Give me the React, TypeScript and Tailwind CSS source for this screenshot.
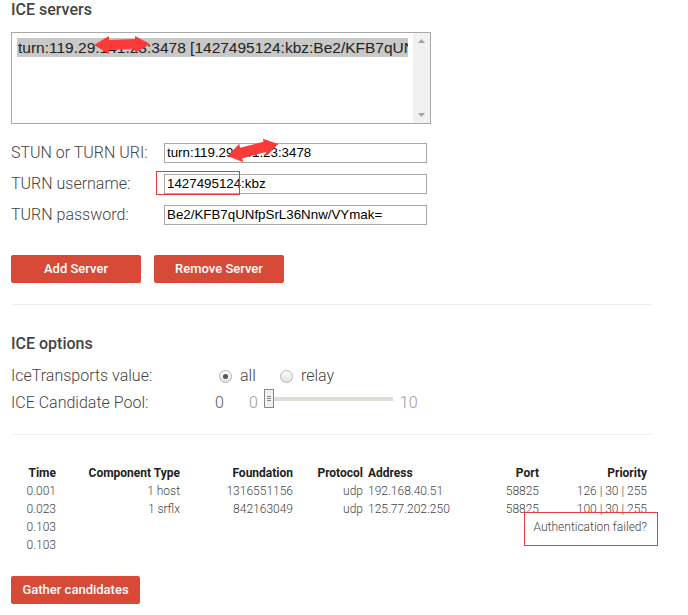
import React from "react";

const rows = [
  { time: "0.001", comp: "1 host", foundation: "1316551156", proto: "udp", address: "192.168.40.51", port: "58825", priority: "126 | 30 | 255" },
  { time: "0.023", comp: "1 srflx", foundation: "842163049", proto: "udp", address: "125.77.202.250", port: "58825", priority: "100 | 30 | 255" },
  { time: "0.103", comp: "", foundation: "", proto: "", address: "", port: "", priority: "" },
  { time: "0.103", comp: "", foundation: "", proto: "", address: "", port: "", priority: "" },
];

const RedArrow = ({ className }: { className: string }) => (
  <svg viewBox="0 0 56 18" preserveAspectRatio="none" className={className}>
    <polygon points="0,9 15,0 15,4 41,3 41,0 56,8 41,17 41,13 15,14 15,18" fill="#fb3a3a" />
  </svg>
);

const Radio = ({ checked }: { checked?: boolean }) => (
  <span className="w-[13px] h-[13px] rounded-full border border-[#b5b5b5] bg-gradient-to-b from-[#fdfdfd] to-[#e2e2e2] flex items-center justify-center">
    {checked && <span className="w-[5px] h-[5px] rounded-full bg-[#555]" />}
  </span>
);

const FormRow = ({ label, value }: { label: string; value: string }) => (
  <div className="flex items-center h-[20px]">
    <label className="w-[153px] text-[16px] leading-[20px]">{label}</label>
    <div className="w-[263px] h-[20px] border border-[#a9a9a9] px-[2px] flex items-center font-['Liberation_Sans',Arial,sans-serif] text-[13.33px] text-black whitespace-nowrap overflow-hidden">
      {value}
    </div>
  </div>
);

const Button = ({ children, w }: { children: React.ReactNode; w: string }) => (
  <button className={`${w} h-[28px] bg-[#d84a38] text-white text-[13px] font-medium rounded-[2px] flex items-center justify-center`}>
    {children}
  </button>
);

export default function App() {
  return (
    <div className="relative w-[688px] h-[615px] bg-white px-[11px] font-['Roboto',sans-serif] font-light text-[#444]">
      <h2 className="text-[16px] leading-[20px] font-medium">ICE servers</h2>

      {/* server list */}
      <div className="mt-[12px] w-[420px] h-[92px] border border-[#a9a9a9] flex">
        <div className="flex-1 p-[5px] overflow-hidden">
          <div className="h-[19px] bg-[#c8c8c8] px-[1px] flex items-center whitespace-nowrap overflow-hidden font-['Liberation_Sans',Arial,sans-serif] text-[15.5px] text-[#222]">
            turn:119.29.141.23:3478 [1427495124:kbz:Be2/KFB7qUNfpSrL36Nnw/VYmak=]
          </div>
        </div>
        <div className="w-[17px] bg-[#f1f1f1] flex flex-col items-center justify-between py-[6px]">
          <svg width="7" height="4" viewBox="0 0 7 4"><polygon points="0,4 3.5,0 7,4" fill="#a3a3a3" /></svg>
          <svg width="7" height="4" viewBox="0 0 7 4"><polygon points="0,0 7,0 3.5,4" fill="#a3a3a3" /></svg>
        </div>
      </div>

      <div className="mt-[19px] flex flex-col gap-[11px]">
        <FormRow label="STUN or TURN URI:" value="turn:119.29.141.23:3478" />
        <FormRow label="TURN username:" value="1427495124:kbz" />
        <FormRow label="TURN password:" value="Be2/KFB7qUNfpSrL36Nnw/VYmak=" />
      </div>

      <div className="mt-[30px] flex gap-[13px]">
        <Button w="w-[130px]">Add Server</Button>
        <Button w="w-[130px]">Remove Server</Button>
      </div>

      <div className="mt-[21px] w-[641px] border-t border-[#eee]" />

      <h2 className="mt-[29px] text-[16px] leading-[20px] font-medium">ICE options</h2>

      <div className="mt-[12px] h-[20px] flex items-center text-[16px]">
        <span className="w-[208px]">IceTransports value:</span>
        <Radio checked />
        <span className="ml-[8px] w-[40px]">all</span>
        <Radio />
        <span className="ml-[8px]">relay</span>
      </div>

      <div className="mt-[7px] h-[20px] flex items-start text-[16px] leading-[20px]">
        <span className="w-[204px]">ICE Candidate Pool:</span>
        <span className="text-[#555]">0</span>
        <span className="ml-[25px] text-[#999]">0</span>
        <div className="ml-[6px] -mt-[4px] flex items-center">
          <div className="w-[10px] h-[19px] border border-[#8a8a8a] bg-[#f0f0f0] flex flex-col items-center justify-center gap-[1px]">
            <span className="w-[4px] h-px bg-[#888]" />
            <span className="w-[4px] h-px bg-[#888]" />
            <span className="w-[4px] h-px bg-[#888]" />
          </div>
          <div className="w-[119px] h-[4px] bg-[#e1ddd5]" />
        </div>
        <span className="ml-[7px] text-[#999]">10</span>
      </div>

      <div className="mt-[21px] w-[641px] border-t border-[#eee]" />

      {/* candidates table */}
      <div className="mt-[29px] grid grid-cols-[45px_124px_113px_70px_107px_69px_108px] text-[12px] leading-[18px]">
        <div className="text-right font-bold text-[#222]">Time</div>
        <div className="text-right font-bold text-[#222]">Component Type</div>
        <div className="text-right font-bold text-[#222]">Foundation</div>
        <div className="text-right font-bold text-[#222]">Protocol</div>
        <div className="pl-[5px] font-bold text-[#222]">Address</div>
        <div className="text-right font-bold text-[#222]">Port</div>
        <div className="text-right font-bold text-[#222]">Priority</div>
        {rows.map((r, i) => (
          <React.Fragment key={i}>
            <div className="text-right">{r.time}</div>
            <div className="text-right">{r.comp}</div>
            <div className="text-right">{r.foundation}</div>
            <div className="text-right">{r.proto}</div>
            <div className="pl-[5px]">{r.address}</div>
            <div className="text-right">{r.port}</div>
            {i === 2 ? (
              <div className="relative flex justify-end whitespace-nowrap">
                <span>Authentication failed?</span>
                <div className="absolute left-[-15px] top-[-6px] w-[134px] h-[34px] border border-[#e8393c]" />
              </div>
            ) : (
              <div className="text-right">{r.priority}</div>
            )}
          </React.Fragment>
        ))}
      </div>

      <div className="mt-[22px]">
        <Button w="w-[129px]">Gather candidates</Button>
      </div>

      {/* screenshot annotations */}
      <RedArrow className="absolute left-[94px] top-[36px] w-[56px] h-[18px]" />
      <RedArrow className="absolute left-[227px] top-[141px] w-[52px] h-[19px] -rotate-12" />
      <div className="absolute left-[156px] top-[171px] w-[84px] h-[24px] border border-[#e8393c]" />
    </div>
  );
}
